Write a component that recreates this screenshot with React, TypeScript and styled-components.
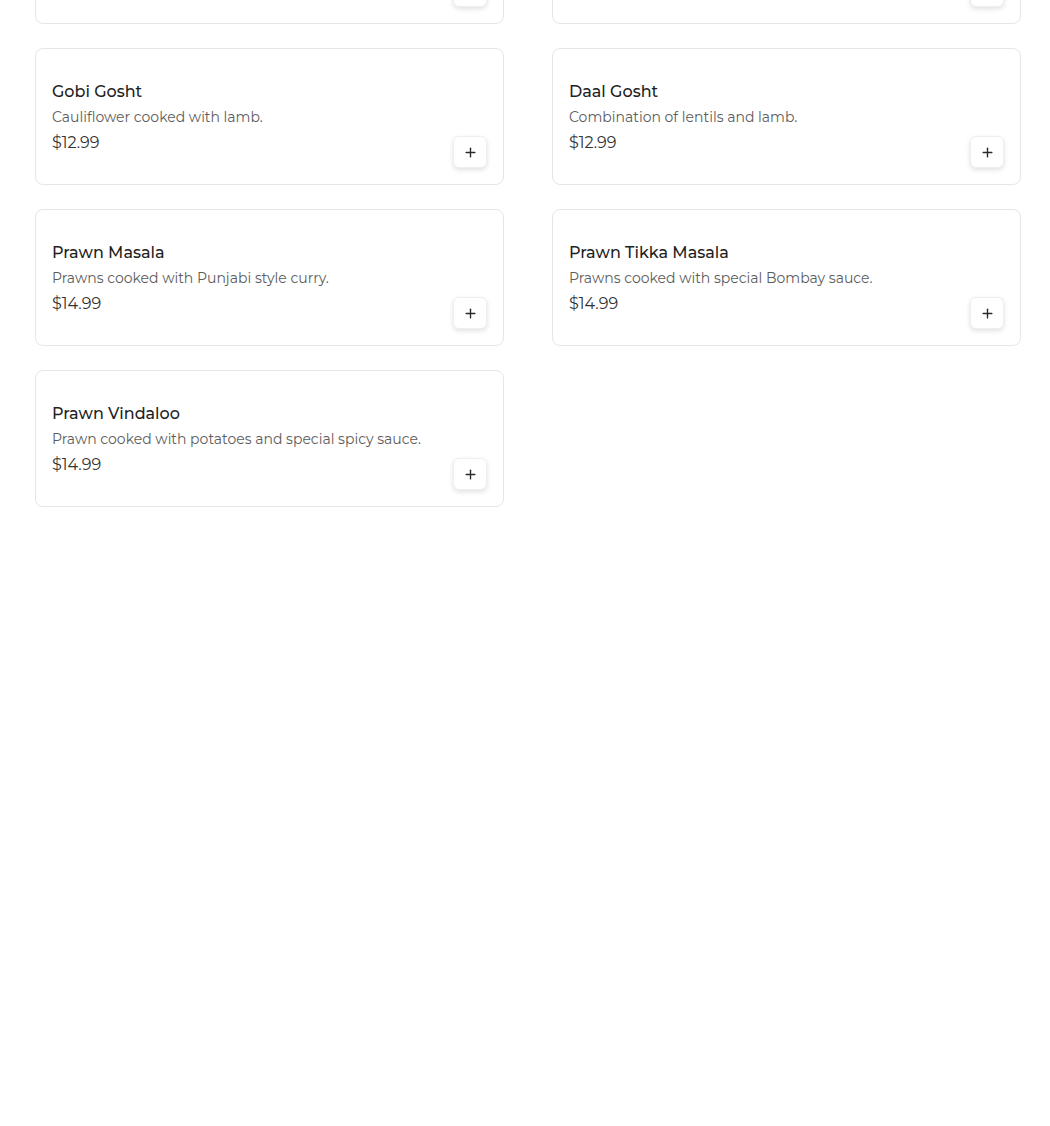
import styled, { createGlobalStyle } from "styled-components";
import { Plus } from "lucide-react";

const dishes = [
  { name: "Lamb Korma", description: "Lamb cooked in a mild creamy sauce.", price: "$12.99" },
  { name: "Lamb Saag", description: "Lamb cooked with fresh spinach.", price: "$12.99" },
  { name: "Gobi Gosht", description: "Cauliflower cooked with lamb.", price: "$12.99" },
  { name: "Daal Gosht", description: "Combination of lentils and lamb.", price: "$12.99" },
  { name: "Prawn Masala", description: "Prawns cooked with Punjabi style curry.", price: "$14.99" },
  { name: "Prawn Tikka Masala", description: "Prawns cooked with special Bombay sauce.", price: "$14.99" },
  { name: "Prawn Vindaloo", description: "Prawn cooked with potatoes and special spicy sauce.", price: "$14.99" },
];

const GlobalStyle = createGlobalStyle`
  html, body {
    margin: 0;
    padding: 0;
    background: #fff;
    font-family: Montserrat, "DejaVu Sans", "Open Sans", sans-serif;
  }
  * {
    box-sizing: border-box;
  }
`;

export default function App() {
  return (
    <>
      <GlobalStyle />
      <MenuGrid>
        {dishes.map((dish, index) => (
          <Card key={index}>
            <Info>
              <Title>{dish.name}</Title>
              <Description>{dish.description}</Description>
              <Price>{dish.price}</Price>
            </Info>
            <AddButton aria-label={`Add ${dish.name}`}>
              <Plus size={15} strokeWidth={2.2} />
            </AddButton>
          </Card>
        ))}
      </MenuGrid>
    </>
  );
}

// the list is scrolled: the first row sits mostly above the viewport
const MenuGrid = styled.main`
  display: grid;
  grid-template-columns: 469px 469px;
  column-gap: 48px;
  row-gap: 24px;
  padding-left: 35px;
  margin-top: -113px;
`;

const Card = styled.article`
  display: flex;
  justify-content: space-between;
  height: 137px;
  padding: 16px;
  border: 1px solid #e6e6e6;
  border-radius: 8px;
  background: #fff;
`;

const Info = styled.div`
  display: flex;
  flex-direction: column;
  align-self: center;
  padding-top: 2px;
`;

const Title = styled.h3`
  margin: 0;
  font-size: 16px;
  line-height: 24px;
  font-weight: 500;
  color: #1f1f1f;
`;

const Description = styled.p`
  margin: 3px 0 0;
  font-size: 14px;
  line-height: 20px;
  color: #5c5c5c;
`;

const Price = styled.span`
  margin-top: 4px;
  font-size: 16px;
  line-height: 24px;
  color: #333;
`;

const AddButton = styled.button`
  align-self: flex-end;
  display: flex;
  align-items: center;
  justify-content: center;
  width: 34px;
  height: 32px;
  padding: 0;
  border: 1px solid #efefef;
  border-radius: 6px;
  background: #fff;
  color: #2a2a2a;
  box-shadow: 0 2px 5px rgba(0, 0, 0, 0.12);
  cursor: pointer;
`;
